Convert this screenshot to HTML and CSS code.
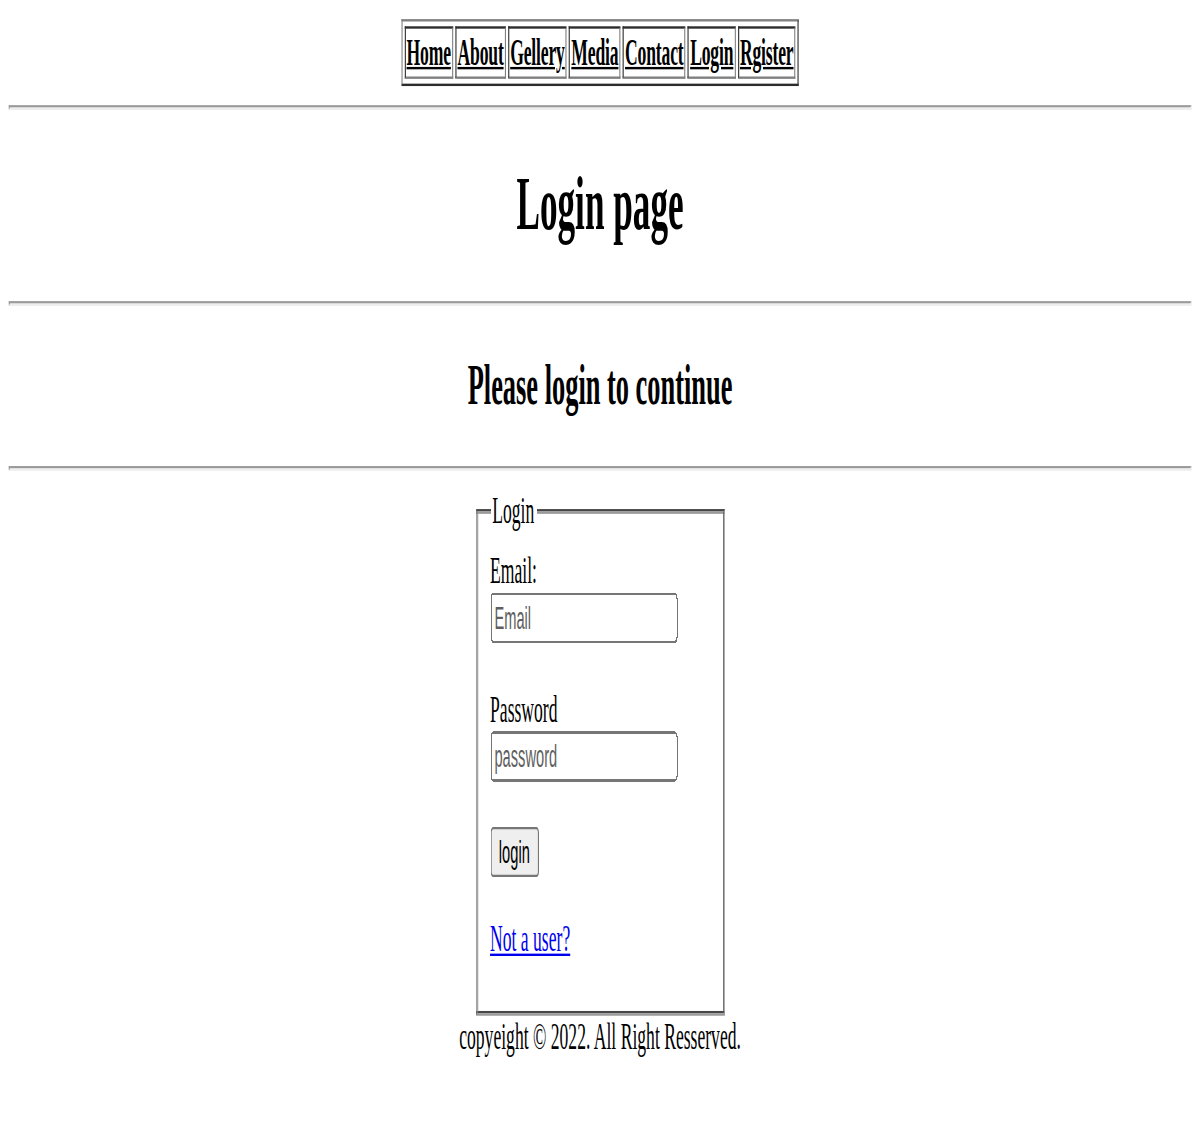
FILE: index.html
```html
<!DOCTYPE html>
<html>
<head>
<meta charset="utf-8">
<title>Login page</title>
<link rel="stylesheet" href="styles.css">
</head>
<body>
<div class="page">
  <table class="nav">
    <tr>
      <td><a href="#">Home</a></td>
      <td><a href="#">About</a></td>
      <td><a href="#">Gellery</a></td>
      <td><a href="#">Media</a></td>
      <td><a href="#">Contact</a></td>
      <td><a href="#">Login</a></td>
      <td><a href="#">Rgister</a></td>
    </tr>
  </table>
  <hr class="rule">
  <h1 class="title">Login page</h1>
  <hr class="rule">
  <h2 class="subtitle">Please login to continue</h2>
  <hr class="rule">
  <form class="login-form">
    <fieldset class="box">
      <legend class="box-legend">Login</legend>
      <label class="field-label" for="email">Email:</label><br>
      <input class="field" id="email" type="email" placeholder="Email"><br><br>
      <label class="field-label" for="pw">Password</label><br>
      <input class="field" id="pw" type="password" placeholder="password"><br><br>
      <button class="btn" type="button">login</button><br><br>
      <a class="signup" href="#">Not a user?</a><br><br>
    </fieldset>
  </form>
  <p class="footer">copyeight © 2022. All Right Resserved.</p>
</div>
</body>
</html>
```

FILE: styles.css
```css
html {
  overflow: hidden;
}

html, body {
  margin: 0;
  padding: 0;
  background: #fff;
}

body {
  height: 1122px;
}

.page {
  width: 1091px;
  padding: 8px;
  box-sizing: border-box;
  font-family: "Liberation Serif", "Times New Roman", serif;
  font-size: 16px;
  color: #000;
  transform: scale(1.1, 2.39);
  transform-origin: 0 0;
}

.nav {
  margin: 0 auto;
  border: 1px outset gray;
  border-spacing: 2px;
}

.nav td {
  border: 1px inset gray;
  padding: 1px;
}

.nav a {
  color: #000;
  font-weight: bold;
  letter-spacing: -0.15px;
}

.rule {
  margin: 8px 0;
  border-style: inset;
  border-width: 1px;
  color: gray;
}

.title {
  font-size: 32px;
  font-weight: bold;
  margin: 21.44px 0;
  text-align: center;
}

.subtitle {
  font-size: 24px;
  font-weight: bold;
  margin: 19.92px 0;
  text-align: center;
}

.login-form {
  margin: 0;
}

.box {
  width: 200px;
  margin: 0 auto;
  padding: 7.3px 11px 3.3px;
  border: 2px groove #9a9a9a;
}

.box-legend {
  padding: 0 2px;
}

.field {
  font-family: "Liberation Sans", Arial, sans-serif;
  font-size: 13.333px;
  width: 170px;
  box-sizing: border-box;
  margin: 0 0 1px;
}

.field::placeholder {
  color: #5f5f5f;
}

.btn {
  font-family: "Liberation Sans", Arial, sans-serif;
  font-size: 13.333px;
  margin-bottom: -1px;
}

.signup {
  color: #0000ee;
}

.footer {
  margin: 0;
  text-align: center;
}
```
